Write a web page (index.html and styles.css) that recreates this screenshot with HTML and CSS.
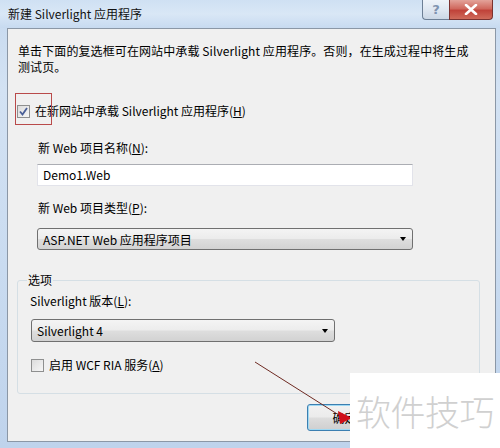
FILE: index.html
```html
<!DOCTYPE html>
<html lang="zh-CN">
<head>
<meta charset="utf-8">
<title>新建 Silverlight 应用程序</title>
<link rel="stylesheet" href="styles.css">
</head>
<body>
<div class="window">
  <div class="titlebar">
    <span class="title">新建 Silverlight 应用程序</span>
    <div class="caption-btns">
      <span class="cbtn help">?</span>
      <span class="cbtn close"><svg width="14" height="11" viewBox="0 0 14 11"><path d="M2 1 L12 10 M12 1 L2 10" stroke="#fff" stroke-width="2.6" stroke-linecap="round"/></svg></span>
    </div>
  </div>
  <div class="client">
    <p class="intro">单击下面的复选框可在网站中承载 Silverlight 应用程序。否则，在生成过程中将生成<br>测试页。</p>
    <div class="check host">
      <span class="box"><svg width="11" height="11" viewBox="0 0 11 11"><path d="M2 5.5 L4.5 8.5 L9 2" fill="none" stroke="#4a5f97" stroke-width="1.8"/></svg></span>
      <span>在新网站中承载 Silverlight 应用程序(<u>H</u>)</span>
    </div>
    <div class="indent">
      <div class="lbl">新 Web 项目名称(<u>N</u>):</div>
      <div class="textbox">Demo1.Web</div>
      <div class="lbl lbl2">新 Web 项目类型(<u>P</u>):</div>
      <div class="select wide"><span>ASP.NET Web 应用程序项目</span><span class="caret"></span></div>
    </div>
    <fieldset class="group">
      <legend>选项</legend>
      <div class="lbl glbl">Silverlight 版本(<u>L</u>):</div>
      <div class="select narrow"><span>Silverlight 4</span><span class="caret"></span></div>
      <div class="check wcf">
        <span class="box"></span>
        <span>启用 WCF RIA 服务(<u>A</u>)</span>
      </div>
    </fieldset>
    <div class="buttons">
      <span class="btn default">确定</span>
      <span class="btn"></span>
    </div>
  </div>
  <div class="highlight"></div>
  <svg class="arrow" width="500" height="448" viewBox="0 0 500 448">
    <line x1="255" y1="362" x2="342" y2="417" stroke="#6e2a22" stroke-width="1"/>
    <polygon points="338,411 352,418 340,424" fill="#d0101a"/>
  </svg>
  <div class="watermark">软件技巧</div>
</div>
</body>
</html>
```
FILE: styles.css
```css
* { box-sizing: border-box; }
html, body { margin: 0; padding: 0; }
body {
  width: 500px;
  height: 448px;
  overflow: hidden;
  font-family: "Noto Sans CJK SC", "Noto Sans", sans-serif;
  font-size: 12px;
  color: #000;
}
.window {
  position: relative;
  width: 500px;
  height: 448px;
  background: linear-gradient(180deg, #c6d9ef 0%, #d3e2f3 20%, #c9dbf0 60%, #bfd3ec 100%);
  display: flex;
  flex-direction: column;
}
.titlebar {
  height: 28px;
  display: flex;
  align-items: flex-start;
  justify-content: space-between;
  background: linear-gradient(180deg, #cfe0f3 0%, #d9e7f6 50%, #c7daf0 100%);
}
.title {
  margin: 6px 0 0 8px;
  line-height: 16px;
  font-size: 12px;
  color: #111;
}
.caption-btns {
  display: flex;
  margin-right: 7px;
}
.cbtn {
  height: 20px;
  display: flex;
  align-items: center;
  justify-content: center;
  border: 1px solid #6d7f95;
  border-top: none;
}
.help {
  width: 27px;
  border-radius: 0 0 0 4px;
  border-right: none;
  background: linear-gradient(180deg, #eef3f9 0%, #dfe7f1 50%, #cbd7e5 100%);
  color: #7f93b0;
  font-family: "DejaVu Sans", sans-serif;
  font-weight: bold;
  font-size: 13px;
}
.close {
  width: 44px;
  border-radius: 0 0 4px 0;
  border-color: #7a3230;
  background: linear-gradient(180deg, #e3a39a 0%, #d0695e 45%, #c0433a 55%, #cf6b5b 100%);
}
.client {
  margin: 0 4px 0 7px;
  height: 414px;
  border: 1px solid #8b97a6;
  background: #f0f0f0;
  padding: 0 7px 0 0;
  display: flex;
  flex-direction: column;
}
.intro {
  margin: 14px 0 0 10px;
  line-height: 16px;
  font-size: 12px;
  letter-spacing: 0.1px;
}
.check {
  display: flex;
  align-items: center;
  height: 16px;
  line-height: 16px;
}
.box {
  width: 13px;
  height: 13px;
  border: 1px solid #8e8f8f;
  background: linear-gradient(135deg, #dcdcdc 0%, #f6f6f6 100%);
  display: flex;
  align-items: center;
  justify-content: center;
  margin-right: 5px;
}
.host {
  margin: 28px 0 0 9px;
}
.indent {
  padding-left: 29px;
  display: flex;
  flex-direction: column;
}
.lbl {
  line-height: 16px;
  padding-left: 1px;
}
.indent .lbl { margin-top: 21px; }
.indent .lbl2 { margin-top: 14px; }
.textbox {
  margin-top: 8px;
  width: 376px;
  height: 22px;
  background: #fff;
  border: 1px solid #e2e3ea;
  border-top-color: #abadb3;
  padding: 0 5px;
  line-height: 20px;
}
.select {
  height: 22px;
  border: 1px solid #707070;
  border-radius: 3px;
  background: linear-gradient(180deg, #f4f4f4 0%, #ececec 48%, #dedede 52%, #d2d2d2 100%);
  display: flex;
  align-items: center;
  justify-content: space-between;
  padding: 0 5px 0 5px;
}
.wide {
  margin-top: 12px;
  width: 376px;
}
.caret {
  width: 0;
  height: 0;
  border-left: 3.5px solid transparent;
  border-right: 3.5px solid transparent;
  border-top: 4px solid #000;
  margin-right: 1px;
}
.group {
  margin: 22px 8px 0 9px;
  padding: 0 12px 20px 12px;
  border: 1px solid #d5dfe5;
  border-radius: 3px;
  min-width: 0;
}
.group legend {
  padding: 0 1px;
  margin-left: -3px;
  line-height: 16px;
}
.glbl { margin-top: 5px; padding-left: 0; }
.narrow {
  margin-top: 10px;
  width: 304px;
  height: 23px;
  margin-left: 1px;
}
.wcf {
  margin: 15px 0 0 1px;
}
.buttons {
  margin-top: 10px;
  padding-left: 299px;
  display: flex;
  gap: 8px;
}
.btn {
  width: 75px;
  height: 27px;
  border: 1px solid #707070;
  border-radius: 3px;
  background: linear-gradient(180deg, #f2f2f2 0%, #ebebeb 48%, #dddddd 52%, #cfcfcf 100%);
  display: flex;
  align-items: center;
  justify-content: center;
}
.btn.default {
  border-color: #3c7fb1;
  box-shadow: inset 0 0 0 1px #9fd9f3;
}
.highlight {
  position: absolute;
  left: 15px;
  top: 93px;
  width: 37px;
  height: 32px;
  border: 1.5px solid #b94a4a;
}
.arrow {
  position: absolute;
  left: 0;
  top: 0;
}
.watermark {
  position: absolute;
  left: 350px;
  top: 373px;
  width: 150px;
  height: 75px;
  background: #fff;
  color: #d0d0d0;
  font-size: 35px;
  font-weight: 300;
  line-height: 75px;
  padding-left: 6px;
  letter-spacing: -0.5px;
}
```
